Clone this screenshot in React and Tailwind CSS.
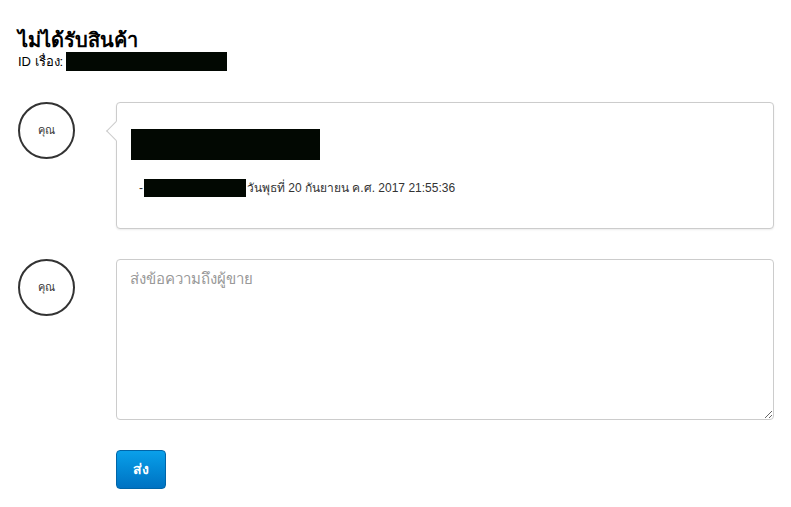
import React from "react";

function Avatar() {
  return (
    <div className="w-[57px] h-[57px] shrink-0 rounded-full border-2 border-[#333] flex items-center justify-center text-[11px] text-[#333]">
      คุณ
    </div>
  );
}

export default function App() {
  return (
    <div className="min-h-[507px] bg-white pl-[18px] pr-[17px] pt-[28px] text-[#333]" style={{ fontFamily: '"Liberation Sans", "Noto Sans", sans-serif' }}>
      <h1 className="text-[20px] font-bold leading-[24px] text-black">ไม่ได้รับสินค้า</h1>
      <div className="flex items-center text-[13px] leading-[19px] text-black">
        <span>ID เรื่อง:</span>
        <span className="ml-[3px] inline-block w-[161px] h-[19px] bg-[#020802]" />
      </div>

      <div className="mt-[31px] flex">
        <div className="w-[98px] shrink-0">
          <Avatar />
        </div>
        <div className="relative flex-1 h-[127px] rounded border border-[#ccc] bg-white shadow-[0_1px_2px_rgba(0,0,0,0.08)] pl-[14px] pt-[26px]">
          <span className="absolute left-[-8px] top-[21px] w-[14px] h-[14px] rotate-45 bg-white border-l border-b border-[#ccc]" />
          <div className="w-[189px] h-[31px] bg-[#020802]" />
          <div className="mt-[19px] flex items-center pl-[8px] text-[12px] text-[#333]">
            <span className="w-[5px]">-</span>
            <span className="inline-block w-[102px] h-[18px] bg-[#020802]" />
            <span className="ml-[1px]">วันพุธที่ 20 กันยายน ค.ศ. 2017 21:55:36</span>
          </div>
        </div>
      </div>

      <div className="mt-[30px] flex">
        <div className="w-[98px] shrink-0">
          <Avatar />
        </div>
        <textarea
          className="flex-1 h-[161px] rounded border border-[#ccc] px-[13px] py-[8px] text-[15px] text-[#333] placeholder:text-[#999] outline-none"
          placeholder="ส่งข้อความถึงผู้ขาย"
        />
      </div>

      <div className="mt-[30px] pl-[98px]">
        <button className="w-[50px] h-[39px] rounded border border-[#0065a8] bg-gradient-to-b from-[#0aa0ea] to-[#0072c2] text-white text-[14px] font-bold">
          ส่ง
        </button>
      </div>
    </div>
  );
}
